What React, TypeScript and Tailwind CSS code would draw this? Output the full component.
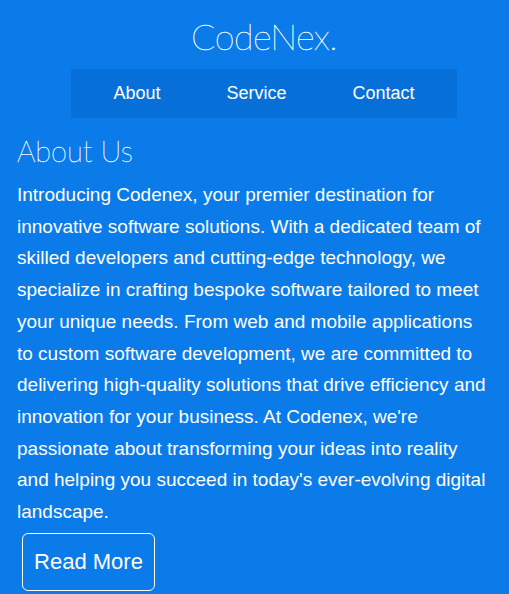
import React from "react";

export default function App() {
  return (
    <div className="min-h-[594px] w-full bg-[#0a7be8] text-white" style={{ fontFamily: '"Liberation Sans", Arial, sans-serif' }}>
      <header className="flex flex-col items-center pl-[19px] pt-[11px]">
        <h1 className="text-[36px] leading-[50px] tracking-[-0.6px] [-webkit-text-stroke:0.35px_white]" style={{ fontFamily: 'Lato, Roboto, sans-serif', fontWeight: 100 }}>
          CodeNex.
        </h1>
        <nav className="mt-[8px] flex h-[49px] w-[386px] items-center justify-center bg-[#0670d8] text-[18px]">
          <a className="px-[33px]">About</a>
          <a className="px-[33px]">Service</a>
          <a className="px-[33px]">Contact</a>
        </nav>
      </header>
      <main className="pl-[17px] pr-[17px] pt-[15px]">
        <h2 className="text-[29px] leading-[36px] [-webkit-text-stroke:0.3px_white]" style={{ fontFamily: 'Lato, Roboto, sans-serif', fontWeight: 100 }}>
          About Us
        </h2>
        <p className="mt-[10px] text-[19px] leading-[31.7px]">
          Introducing Codenex, your premier destination for innovative software solutions. With a dedicated team of skilled developers and cutting-edge technology, we specialize in crafting bespoke software tailored to meet your unique needs. From web and mobile applications to custom software development, we are committed to delivering high-quality solutions that drive efficiency and innovation for your business. At Codenex, we're passionate about transforming your ideas into reality and helping you succeed in today's ever-evolving digital landscape.
        </p>
        <button className="ml-[5px] mt-[5px] h-[58px] w-[133px] rounded-[6px] border border-white text-[22px]">
          Read More
        </button>
      </main>
    </div>
  );
}
